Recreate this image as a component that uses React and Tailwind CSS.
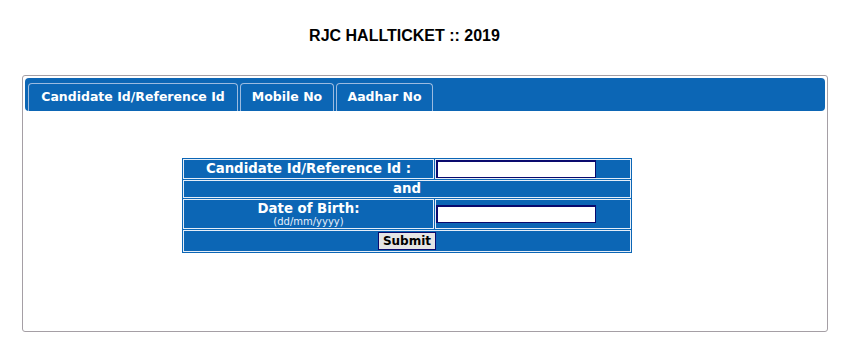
export default function App() {
  const blue = "bg-[#0c66b5]";
  return (
    <div className="w-[842px] h-[337px] bg-white overflow-hidden" style={{ fontFamily: '"DejaVu Sans", Verdana, sans-serif' }}>
      <div className="pt-[26px] h-[75px] text-center pr-[33px]">
        <h1 className="text-[16px] leading-[19px] font-bold text-black" style={{ fontFamily: '"Liberation Sans", Arial, sans-serif' }}>
          RJC HALLTICKET :: 2019
        </h1>
      </div>
      <div className="ml-[22px] w-[806px] h-[257px] border border-[#a59fa5] rounded-[3px] p-[2px]">
        <div className={`${blue} h-[33px] rounded-[4px] flex items-end gap-[2px] pl-[3px]`}>
          <div className="h-[28px] w-[210px] border border-b-0 border-[#9cbbe0] rounded-t-[4px] flex items-center justify-center text-white font-bold text-[12.5px]">
            Candidate Id/Reference Id
          </div>
          <div className="h-[28px] w-[94px] border border-b-0 border-[#9cbbe0] rounded-t-[4px] flex items-center justify-center text-white font-bold text-[12.5px]">
            Mobile No
          </div>
          <div className="h-[28px] w-[97px] border border-b-0 border-[#9cbbe0] rounded-t-[4px] flex items-center justify-center text-white font-bold text-[12.5px]">
            Aadhar No
          </div>
        </div>
        <div className="pt-[47px] pl-[157px]">
          <table className={`${blue} border-separate border-spacing-[1px] w-[450px] text-white font-bold text-[13.3px]`}>
            <tbody>
              <tr>
                <td className="h-[20px] w-[251px] p-0 border border-[#e6eef8] text-center leading-[16px]">Candidate Id/Reference Id :</td>
                <td className="h-[20px] p-0 border border-[#e6eef8] align-top">
                  <input className="block bg-white w-[160px] h-[18px] border-t-2 border-l-2 border-r border-b border-[#0a0a6e] outline-none" />
                </td>
              </tr>
              <tr>
                <td colSpan={2} className="h-[18px] p-0 border border-[#e6eef8] text-center leading-[16px]">and</td>
              </tr>
              <tr>
                <td className="h-[30px] p-0 border border-[#e6eef8] text-center">
                  <div className="leading-[15px]">Date of Birth:</div>
                  <div className="leading-[11px] text-[10px] font-normal text-[#e8eef8]">(dd/mm/yyyy)</div>
                </td>
                <td className="h-[30px] p-0 border border-[#e6eef8]">
                  <input className="block bg-white w-[160px] h-[18px] border-t-2 border-l-2 border-r border-b border-[#0a0a6e] outline-none" />
                </td>
              </tr>
              <tr>
                <td colSpan={2} className="h-[20px] p-0 border border-[#e6eef8] text-center">
                  <button className="inline-block align-middle h-[18px] w-[58px] bg-[#e5e5e5] border border-[#0a0a6e] text-black font-bold text-[12px] leading-[15px]">
                    Submit
                  </button>
                </td>
              </tr>
            </tbody>
          </table>
        </div>
      </div>
    </div>
  );
}
